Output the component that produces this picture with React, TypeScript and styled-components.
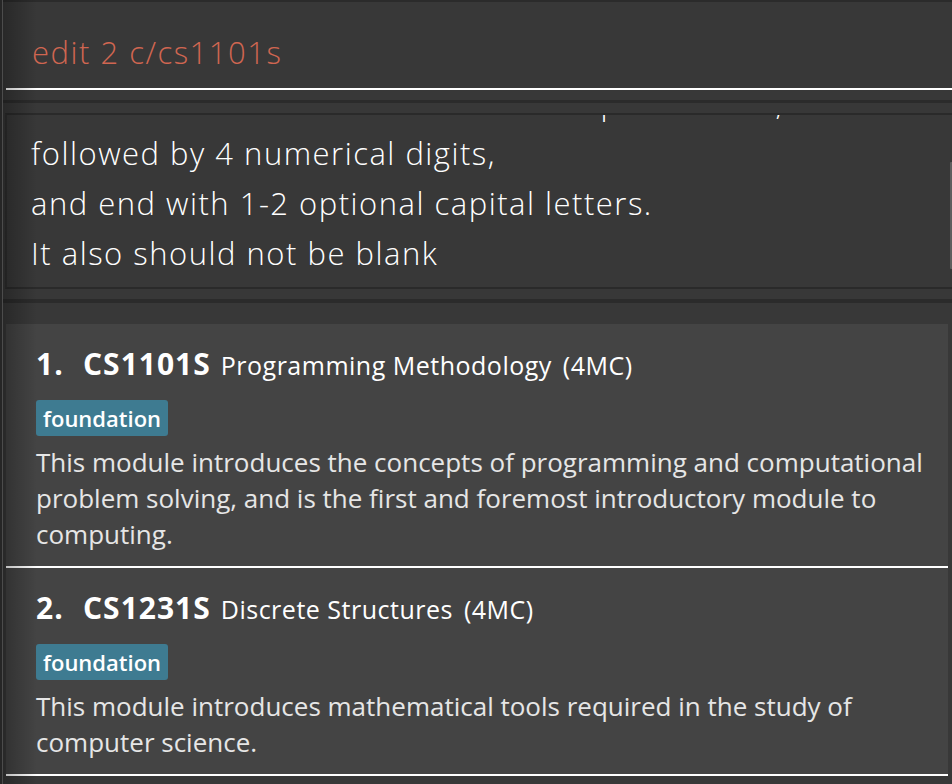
import React from "react";
import styled, { createGlobalStyle } from "styled-components";

const Global = createGlobalStyle`
  html, body { margin: 0; padding: 0; background: #262626; }
  body { font-family: "Open Sans", "Noto Sans", sans-serif; }
  * { box-sizing: border-box; }
`;

const Window = styled.div`
  position: relative;
  width: 952px;
  height: 784px;
  overflow: hidden;
  background: #2b2b2b;
  border-left: 2px solid #262626;
  display: flex;
  flex-direction: column;
  &::before {
    content: "";
    position: absolute;
    left: 0;
    top: 0;
    bottom: 0;
    width: 1px;
    background: #4c4c4c;
    z-index: 3;
  }
  &::after {
    content: "";
    position: absolute;
    left: 1px;
    top: 0;
    bottom: 0;
    width: 34px;
    background: linear-gradient(to right, rgba(0, 0, 0, 0.28), rgba(0, 0, 0, 0));
    pointer-events: none;
    z-index: 2;
  }
`;

const Section = styled.section<{ $gapTop: number }>`
  margin-top: ${(p) => p.$gapTop}px;
  background: #383838;
  display: flex;
  flex-direction: column;
`;

const CommandBox = styled(Section)`
  height: 98px;
  padding: 0 0 10px 4px;
`;

const CommandInput = styled.div`
  flex: 1;
  display: flex;
  align-items: center;
  padding: 14px 0 0 26px;
  border-bottom: 2px solid #ffffff;
  font-size: 31px;
  font-weight: 300;
  letter-spacing: 1.5px;
  color: #d06651;
`;

const ResultSection = styled(Section)`
  height: 196px;
  padding: 10px 0 10px 3px;
`;

const ResultBox = styled.div`
  flex: 1;
  display: flex;
  border-top: 2px solid #2a2a2a;
  border-bottom: 2px solid #2a2a2a;
  border-left: 2px solid #2e2e2e;
  overflow: hidden;
`;

const ResultText = styled.div`
  flex: 1;
  overflow: hidden;
  padding-left: 24px;
`;

const ResultLines = styled.div`
  margin-top: -37px;
  font-size: 31px;
  font-weight: 300;
  letter-spacing: 1.5px;
  line-height: 50px;
  color: #ffffff;
  white-space: nowrap;
`;

const ScrollTrack = styled.div`
  width: 2px;
  padding-top: 47px;
`;

const ScrollThumb = styled.div`
  height: 107px;
  background: #5e5e5e;
  border-radius: 1px 0 0 1px;
`;

const ListSection = styled(Section)`
  flex: 1;
  padding: 21px 4px 0 4px;
  overflow: hidden;
`;

const Card = styled.div`
  background: #444444;
  padding: 20px 10px 14px 30px;
  border-bottom: 2px solid #ffffff;
`;

const TitleRow = styled.div`
  display: flex;
  align-items: baseline;
  height: 40px;
  line-height: 40px;
  color: #ffffff;
  white-space: nowrap;
`;

const Index = styled.span`
  font-size: 30px;
  font-weight: 700;
  letter-spacing: 1px;
  width: 47px;
`;

const Code = styled.span`
  font-size: 30px;
  font-weight: 700;
  letter-spacing: 1px;
  margin-right: 10px;
`;

const Name = styled.span`
  font-size: 25px;
  font-weight: 400;
  letter-spacing: 0.5px;
  margin-right: 11px;
`;

const Credits = styled.span`
  font-size: 25px;
  font-weight: 400;
  letter-spacing: 0.5px;
`;

const Tags = styled.div`
  display: flex;
  margin-top: 16px;
`;

const Tag = styled.span`
  background: #3e7b91;
  color: #ffffff;
  font-size: 22px;
  font-weight: 600;
  line-height: 36px;
  padding: 0 7px;
  border-radius: 3px;
`;

const Description = styled.div`
  margin-top: 8px;
  font-size: 26px;
  line-height: 36px;
  color: #e6e6e6;
`;

const modules = [
  {
    code: "CS1101S",
    name: "Programming Methodology",
    mc: "(4MC)",
    tag: "foundation",
    desc: "This module introduces the concepts of programming and computational problem solving, and is the first and foremost introductory module to computing.",
  },
  {
    code: "CS1231S",
    name: "Discrete Structures",
    mc: "(4MC)",
    tag: "foundation",
    desc: "This module introduces mathematical tools required in the study of computer science.",
  },
];

export default function App() {
  return (
    <>
      <Global />
      <Window>
        <CommandBox $gapTop={2}>
          <CommandInput>edit 2 c/cs1101s</CommandInput>
        </CommandBox>
        <ResultSection $gapTop={3}>
          <ResultBox>
            <ResultText>
              <ResultLines>
                Module code should start with 2-3 capital letters,
                <br />
                followed by 4 numerical digits,
                <br />
                and end with 1-2 optional capital letters.
                <br />
                It also should not be blank
              </ResultLines>
            </ResultText>
            <ScrollTrack>
              <ScrollThumb />
            </ScrollTrack>
          </ResultBox>
        </ResultSection>
        <ListSection $gapTop={4}>
          {modules.map((m, i) => (
            <Card key={m.code}>
              <TitleRow>
                <Index>{i + 1}.</Index>
                <Code>{m.code}</Code>
                <Name>{m.name}</Name>
                <Credits>{m.mc}</Credits>
              </TitleRow>
              <Tags>
                <Tag>{m.tag}</Tag>
              </Tags>
              <Description>{m.desc}</Description>
            </Card>
          ))}
        </ListSection>
      </Window>
    </>
  );
}
